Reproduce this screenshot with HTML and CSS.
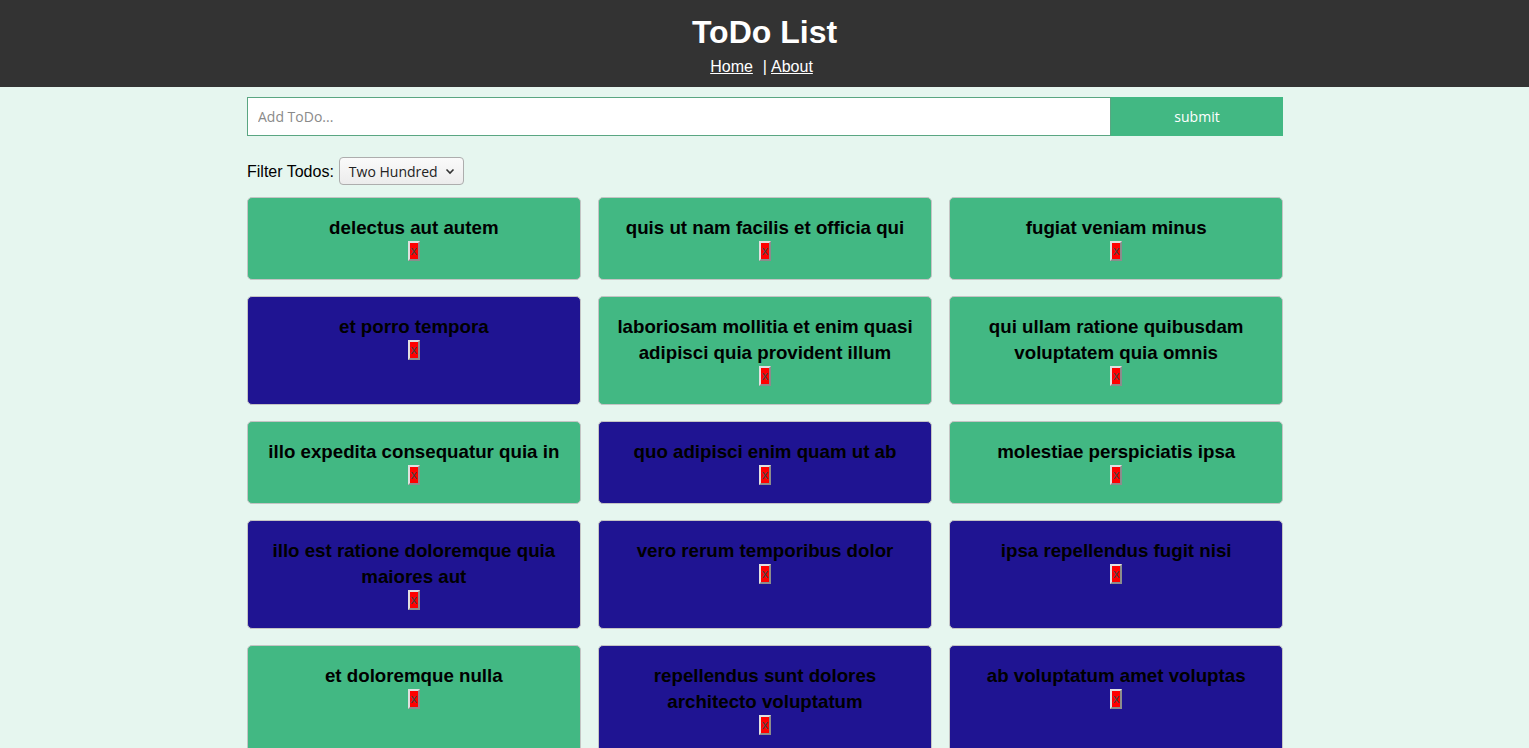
FILE: index.html
```html
<!DOCTYPE html>
<html>
<head>
<meta charset="utf-8">
<title>ToDo List</title>
<link rel="stylesheet" href="styles.css">
</head>
<body>
<header class="header">
  <h1 class="title">ToDo List</h1>
  <nav class="nav"><a href="#">Home</a><span class="sep">|</span><a href="#">About</a></nav>
</header>
<main class="container">
  <form class="add-form">
    <input class="add-input" type="text" placeholder="Add ToDo...">
    <button class="add-btn" type="button">submit</button>
  </form>
  <div class="filter">
    <label class="filter-label">Filter Todos:</label>
    <div class="select">Two Hundred <svg width="10" height="7" viewBox="0 0 10 7"><path d="M1.5 1.5 L5 5 L8.5 1.5" fill="none" stroke="#333" stroke-width="1.6"/></svg></div>
  </div>
  <div class="grid">
    <div class="todo green"><h3 class="todo-title">delectus aut autem</h3><div class="del-row"><button class="del">x</button></div></div>
    <div class="todo green"><h3 class="todo-title">quis ut nam facilis et officia qui</h3><div class="del-row"><button class="del">x</button></div></div>
    <div class="todo green"><h3 class="todo-title">fugiat veniam minus</h3><div class="del-row"><button class="del">x</button></div></div>

    <div class="todo blue"><h3 class="todo-title">et porro tempora</h3><div class="del-row"><button class="del">x</button></div></div>
    <div class="todo green"><h3 class="todo-title">laboriosam mollitia et enim quasi adipisci quia provident illum</h3><div class="del-row"><button class="del">x</button></div></div>
    <div class="todo green"><h3 class="todo-title">qui ullam ratione quibusdam voluptatem quia omnis</h3><div class="del-row"><button class="del">x</button></div></div>

    <div class="todo green"><h3 class="todo-title">illo expedita consequatur quia in</h3><div class="del-row"><button class="del">x</button></div></div>
    <div class="todo blue"><h3 class="todo-title">quo adipisci enim quam ut ab</h3><div class="del-row"><button class="del">x</button></div></div>
    <div class="todo green"><h3 class="todo-title">molestiae perspiciatis ipsa</h3><div class="del-row"><button class="del">x</button></div></div>

    <div class="todo blue"><h3 class="todo-title">illo est ratione doloremque quia maiores aut</h3><div class="del-row"><button class="del">x</button></div></div>
    <div class="todo blue"><h3 class="todo-title">vero rerum temporibus dolor</h3><div class="del-row"><button class="del">x</button></div></div>
    <div class="todo blue"><h3 class="todo-title">ipsa repellendus fugit nisi</h3><div class="del-row"><button class="del">x</button></div></div>

    <div class="todo green"><h3 class="todo-title">et doloremque nulla</h3><div class="del-row"><button class="del">x</button></div></div>
    <div class="todo blue"><h3 class="todo-title">repellendus sunt dolores architecto voluptatum</h3><div class="del-row"><button class="del">x</button></div></div>
    <div class="todo blue"><h3 class="todo-title">ab voluptatum amet voluptas</h3><div class="del-row"><button class="del">x</button></div></div>
  </div>
</main>
</body>
</html>
```

FILE: styles.css
```css
html, body {
  margin: 0;
  padding: 0;
}
body {
  background: #e6f6ef;
  font-family: "Liberation Sans", Arial, sans-serif;
  font-size: 16px;
  color: #000;
}
.header {
  background: #333333;
  color: #fff;
  text-align: center;
  padding: 14px 0 11px;
}
.title {
  margin: 0 0 7px;
  font-size: 32px;
  line-height: 37px;
  font-weight: bold;
}
.nav {
  line-height: 18px;
  font-size: 16px;
  padding-right: 6px;
}
.nav a {
  color: #fff;
  text-decoration: underline;
}
.sep {
  margin: 0 4px 0 10px;
}
.container {
  width: 1036px;
  margin-left: calc((100% - 1035px) / 2);
}
.add-form {
  display: flex;
  margin: 10px 0 0;
  height: 39px;
}
.add-input {
  flex: 1;
  min-width: 0;
  box-sizing: border-box;
  height: 39px;
  border: 1px solid #5aa682;
  background: #fff;
  padding: 0 10px;
  font-family: "Open Sans", "Noto Sans", sans-serif;
  font-size: 14px;
  outline: none;
}
.add-input::placeholder {
  color: #8a8a8a;
}
.add-btn {
  flex: 0 0 172px;
  border: none;
  background: #42b883;
  color: #fff;
  font-family: "Open Sans", "Noto Sans", sans-serif;
  font-size: 14px;
  height: 39px;
}
.filter {
  display: flex;
  align-items: center;
  height: 28px;
  margin: 21px 0 12px;
}
.filter-label {
  margin-right: 5px;
  padding-top: 2px;
}
.select {
  box-sizing: border-box;
  height: 28px;
  width: 125px;
  display: flex;
  align-items: center;
  justify-content: space-between;
  padding: 0 8px 0 9px;
  border: 1px solid #adadad;
  border-radius: 4px;
  background: linear-gradient(#fafafa, #ececec);
  font-family: "Open Sans", "Noto Sans", sans-serif;
  font-size: 14px;
  color: #222;
}
.grid {
  display: grid;
  grid-template-columns: repeat(3, 1fr);
  column-gap: 17.5px;
  row-gap: 16px;
}
.todo {
  border: 1px solid #c4c4c4;
  border-radius: 5px;
  padding: 17px 10px 17px;
  text-align: center;
}
.green {
  background: #42b883;
}
.blue {
  background: #1f1492;
}
.todo-title {
  margin: 0;
  font-size: 18.72px;
  line-height: 26px;
  font-weight: bold;
  color: #000;
}
.del-row {
  height: 21px;
  display: flex;
  justify-content: center;
  align-items: flex-start;
}
.del {
  box-sizing: border-box;
  width: 12px;
  height: 20px;
  padding: 0;
  border: 2px outset #e0e0e0;
  background: #ff0000;
  color: #444;
  font-family: "Liberation Sans", Arial, sans-serif;
  font-size: 13px;
  line-height: 16px;
}
```
